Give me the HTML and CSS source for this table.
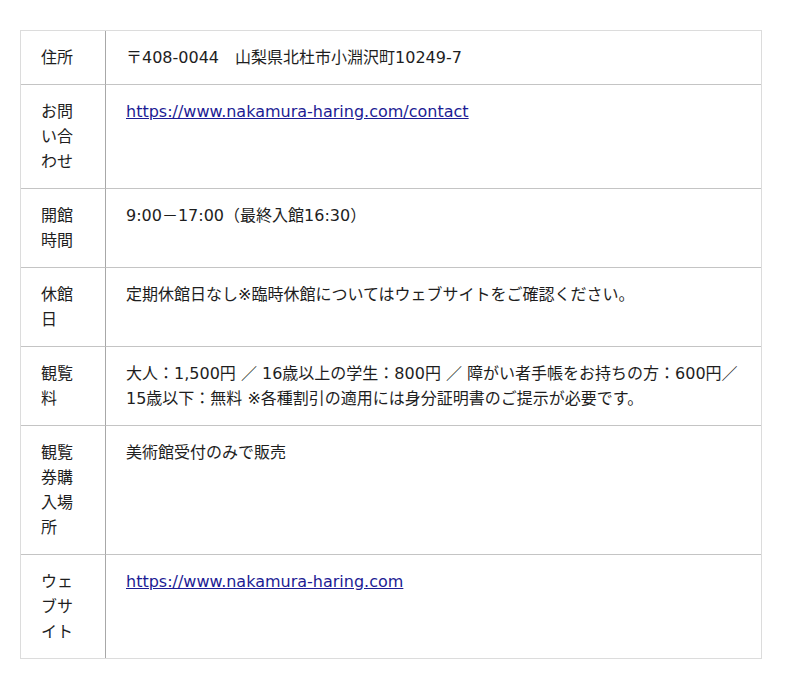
FILE: index.html
```html
<!DOCTYPE html>
<html lang="ja">
<head>
<meta charset="utf-8">
<title>施設情報</title>
<link rel="stylesheet" href="styles.css">
</head>
<body>
<div class="page">
<table class="info">
<tbody>
<tr><th>住所</th><td>〒408-0044　山梨県北杜市小淵沢町10249-7</td></tr>
<tr><th>お問い合わせ</th><td><a href="#">https://www.nakamura-haring.com/contact</a></td></tr>
<tr><th>開館時間</th><td>9:00－17:00（最終入館16:30）</td></tr>
<tr><th>休館日</th><td>定期休館日なし※臨時休館についてはウェブサイトをご確認ください。</td></tr>
<tr><th>観覧料</th><td>大人：1,500円 ／ 16歳以上の学生：800円 ／ 障がい者手帳をお持ちの方：600円／15歳以下：無料 ※各種割引の適用には身分証明書のご提示が必要です。</td></tr>
<tr><th>観覧券購入場所</th><td>美術館受付のみで販売</td></tr>
<tr class="last"><th>ウェブサイト</th><td><a href="#">https://www.nakamura-haring.com</a></td></tr>
</tbody>
</table>
</div>
</body>
</html>
```
FILE: styles.css
```css
html, body {
  margin: 0;
  padding: 0;
  background: #fff;
}
.page {
  padding: 30px 38px 30px 20px;
}
.info {
  width: 742px;
  border-collapse: separate;
  border-spacing: 0;
  border: 1px solid #dcdcdc;
  font-family: "DejaVu Sans", "Noto Sans CJK JP", sans-serif;
  font-size: 16px;
  line-height: 25px;
  color: #1e1e1e;
}
.info th,
.info td {
  vertical-align: top;
  text-align: left;
  font-weight: normal;
  padding: 14px 20px;
  border-bottom: 1px solid #c4c4c4;
}
.info th {
  width: 44px;
  border-right: 1px solid #a8a8a8;
}
.info tr.last th,
.info tr.last td {
  border-bottom: none;
}
.info a {
  color: #1c1c94;
  text-decoration: underline;
}
```
